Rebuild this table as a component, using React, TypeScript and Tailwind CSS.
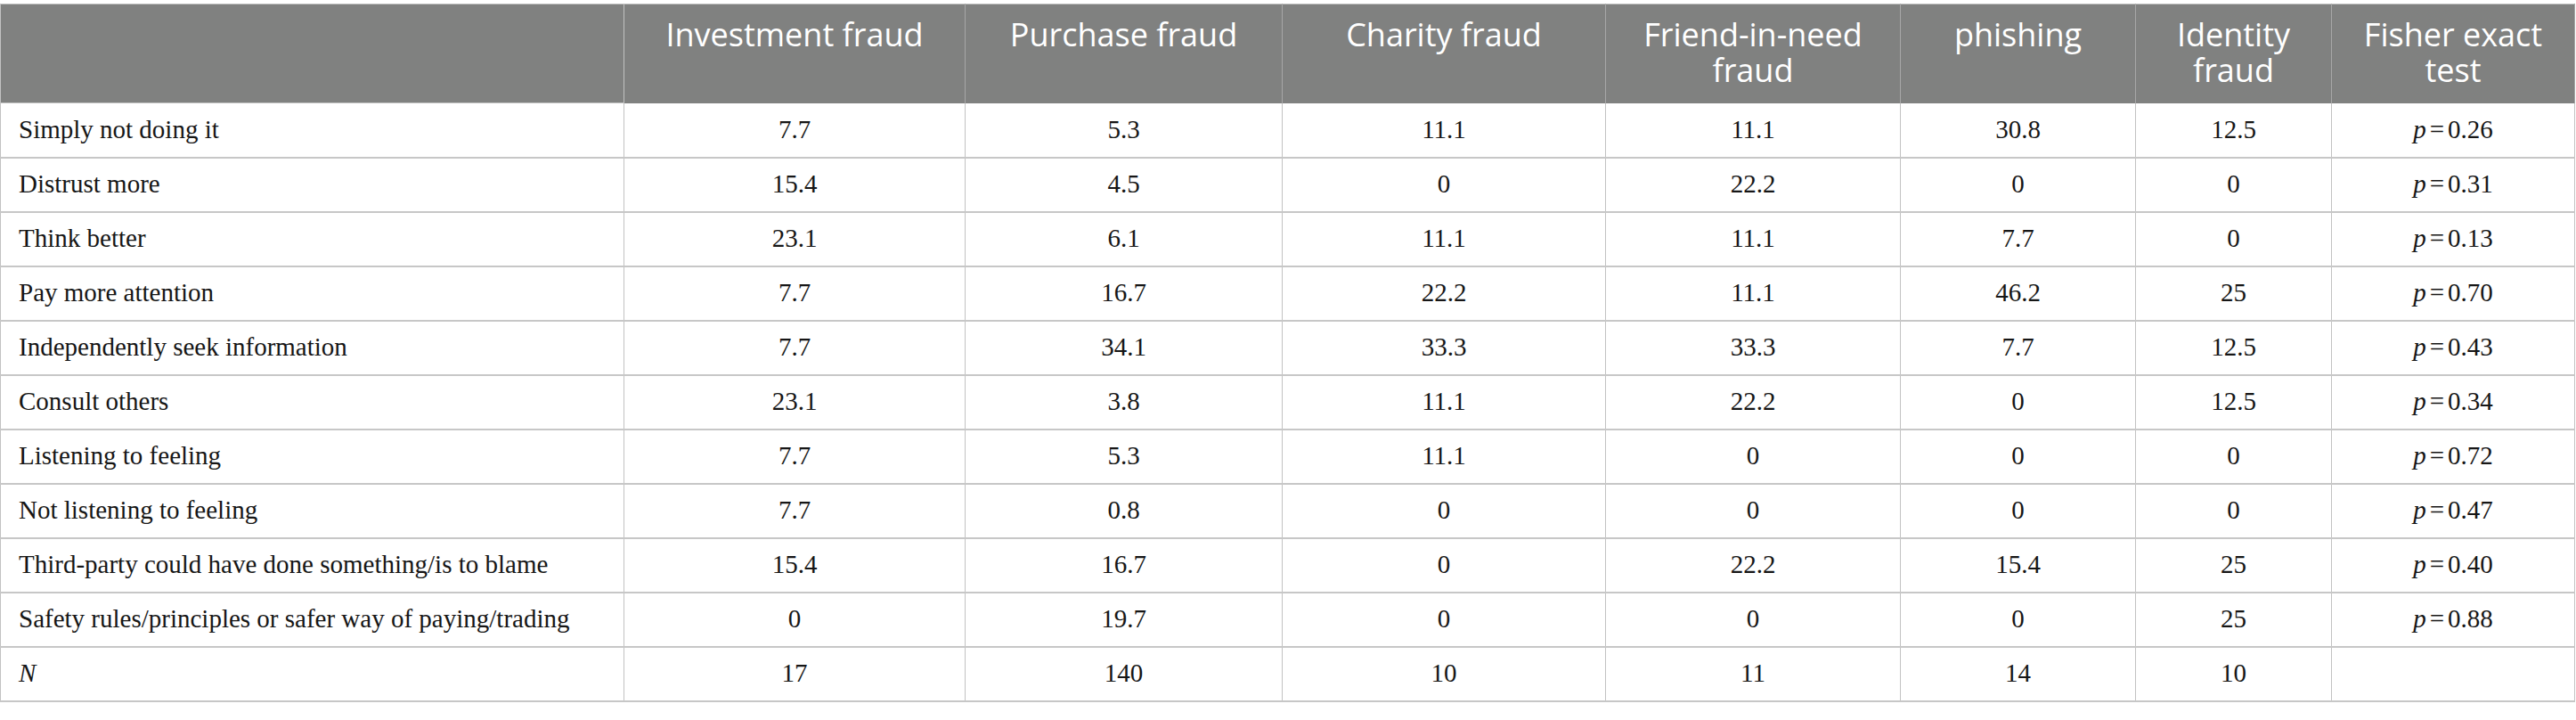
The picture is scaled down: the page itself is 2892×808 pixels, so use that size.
import React from "react";

const headers = [
  "Investment fraud",
  "Purchase fraud",
  "Charity fraud",
  "Friend-in-need fraud",
  "phishing",
  "Identity fraud",
  "Fisher exact test",
];

const widths = [700, 383, 356, 363, 331, 264, 220, 273];

const rows: { label: string; values: string[]; p?: string; italic?: boolean }[] = [
  { label: "Simply not doing it", values: ["7.7", "5.3", "11.1", "11.1", "30.8", "12.5"], p: "0.26" },
  { label: "Distrust more", values: ["15.4", "4.5", "0", "22.2", "0", "0"], p: "0.31" },
  { label: "Think better", values: ["23.1", "6.1", "11.1", "11.1", "7.7", "0"], p: "0.13" },
  { label: "Pay more attention", values: ["7.7", "16.7", "22.2", "11.1", "46.2", "25"], p: "0.70" },
  { label: "Independently seek information", values: ["7.7", "34.1", "33.3", "33.3", "7.7", "12.5"], p: "0.43" },
  { label: "Consult others", values: ["23.1", "3.8", "11.1", "22.2", "0", "12.5"], p: "0.34" },
  { label: "Listening to feeling", values: ["7.7", "5.3", "11.1", "0", "0", "0"], p: "0.72" },
  { label: "Not listening to feeling", values: ["7.7", "0.8", "0", "0", "0", "0"], p: "0.47" },
  { label: "Third-party could have done something/is to blame", values: ["15.4", "16.7", "0", "22.2", "15.4", "25"], p: "0.40" },
  { label: "Safety rules/principles or safer way of paying/trading", values: ["0", "19.7", "0", "0", "0", "25"], p: "0.88" },
  { label: "N", values: ["17", "140", "10", "11", "14", "10"], italic: true },
];

export default function App() {
  return (
    <div className="w-[2892px] h-[808px] bg-white pt-1">
      <table className="table-fixed border-collapse w-[2891px] border border-[#c2c2c2]">
        <colgroup>
          {widths.map((w, i) => (
            <col key={i} style={{ width: w }} />
          ))}
        </colgroup>
        <thead>
          <tr className="bg-[#808180]">
            <th className="h-[111px] border border-[#c2c2c2]" />
            {headers.map((h) => (
              <th
                key={h}
                className="h-[111px] align-top pt-[14px] px-3 border-x border-[#a7a7a7] border-t border-t-[#c2c2c2] font-['Open_Sans',sans-serif] text-[36px] leading-[40px] font-normal text-white text-center"
              >
                {h}
              </th>
            ))}
          </tr>
        </thead>
        <tbody className="font-['Liberation_Serif',serif] text-[29px] text-[#161616]">
          {rows.map((r) => (
            <tr key={r.label}>
              <td className={`h-[61px] border-x border-x-[#c2c2c2] border-b-2 border-b-[#c7c7c7] pl-5 align-middle ${r.italic ? "italic" : ""}`}>
                {r.label}
              </td>
              {r.values.map((v, i) => (
                <td key={i} className="h-[61px] border-x border-x-[#c2c2c2] border-b-2 border-b-[#c7c7c7] text-center align-middle">
                  {v}
                </td>
              ))}
              <td className="h-[61px] border-x border-x-[#c2c2c2] border-b-2 border-b-[#c7c7c7] text-center align-middle">
                {r.p ? (
                  <span>
                    <span className="italic">p</span>
                    <span className="mx-[4px]">=</span>
                    {r.p}
                  </span>
                ) : null}
              </td>
            </tr>
          ))}
        </tbody>
      </table>
    </div>
  );
}
